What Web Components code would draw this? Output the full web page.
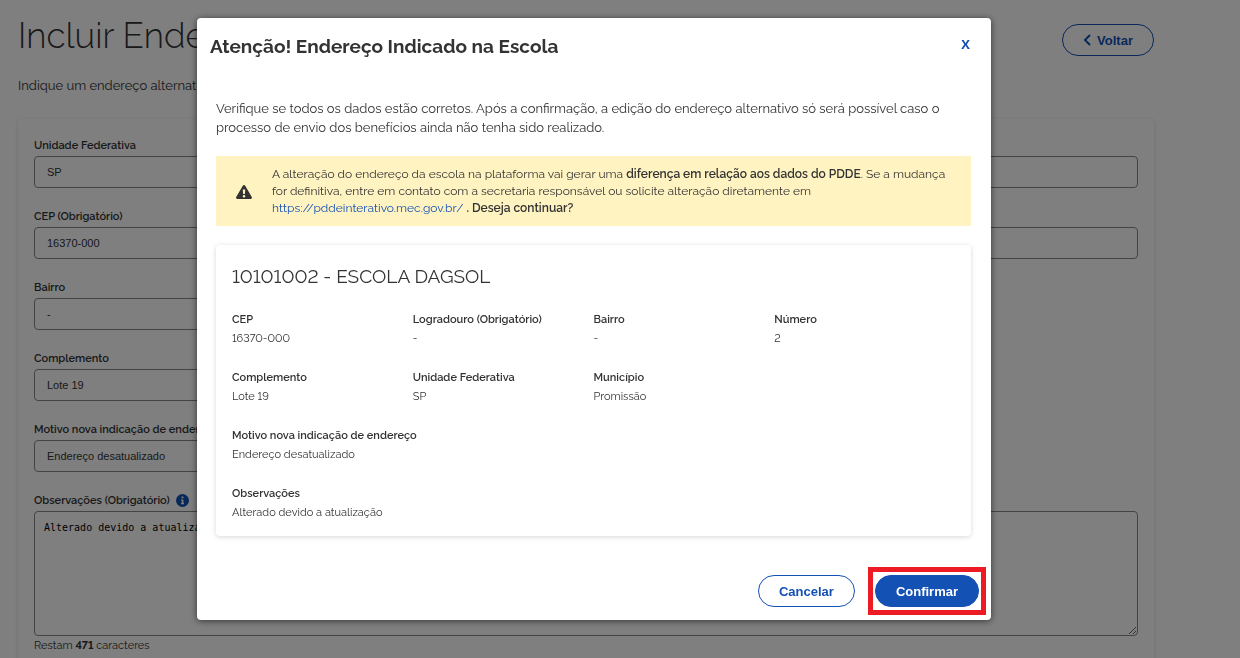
<!DOCTYPE html>
<html lang="pt-BR">
<head>
<meta charset="utf-8">
<meta name="viewport" content="width=device-width, initial-scale=1">
<title>Incluir Endereço Alternativo</title>
<style>
    :root {
        --primary: #1351b4;
        --text: #333;
        --border: #888;
        --font-ui: "Liberation Sans", Arial, sans-serif;
    }
    body {
        margin: 0;
        height: 100vh;
        overflow: hidden;
        background: #fff;
        color: var(--text);
        font-family: Raleway, Lato, sans-serif;
        font-size: 13px;
        font-variant-numeric: lining-nums;
    }
</style>
</head>
<body>
<address-page></address-page>
<app-modal heading="Atenção! Endereço Indicado na Escola">
    <p>Verifique se todos os dados estão corretos. Após a confirmação, a edição do endereço alternativo só será possível caso o processo de envio dos benefícios ainda não tenha sido realizado.</p>
    <alert-box>A alteração do endereço da escola na plataforma vai gerar uma <strong>diferença em relação aos dados do PDDE</strong>. Se a mudança for definitiva, entre em contato com a secretaria responsável ou solicite alteração diretamente em <a href="https://pddeinterativo.mec.gov.br/">https://pddeinterativo.mec.gov.br/</a> <strong>. Deseja continuar?</strong></alert-box>
    <school-card heading="10101002 - ESCOLA DAGSOL">
        <data-item label="CEP">16370-000</data-item>
        <data-item label="Logradouro (Obrigatório)">-</data-item>
        <data-item label="Bairro">-</data-item>
        <data-item label="Número">2</data-item>
        <data-item label="Complemento">Lote 19</data-item>
        <data-item label="Unidade Federativa">SP</data-item>
        <data-item label="Município">Promissão</data-item>
        <data-item label="Motivo nova indicação de endereço" wide>Endereço desatualizado</data-item>
        <data-item label="Observações" wide>Alterado devido a atualização</data-item>
    </school-card>
    <pill-button slot="actions">Cancelar</pill-button>
    <highlight-frame slot="actions"><pill-button primary>Confirmar</pill-button></highlight-frame>
</app-modal>

<script>
class PillButton extends HTMLElement {
    constructor() {
        super();
        this.attachShadow({mode: 'open'});
        this.shadowRoot.innerHTML = `
            <style>
                :host {
                    display: inline-block;
                }
                button {
                    display: flex;
                    align-items: center;
                    gap: 6px;
                    height: 32px;
                    padding: 0 20px;
                    border: 1px solid var(--primary);
                    border-radius: 16px;
                    background: transparent;
                    color: var(--primary);
                    font: bold 13px var(--font-ui);
                    cursor: pointer;
                }
                :host([primary]) button {
                    background: var(--primary);
                    color: #fff;
                }
            </style>
            <button type="button"><slot></slot></button>
        `;
    }
}

class HighlightFrame extends HTMLElement {
    constructor() {
        super();
        this.attachShadow({mode: 'open'});
        this.shadowRoot.innerHTML = `
            <style>
                :host {
                    display: flex;
                    padding: 3px 2px;
                    border: 5px solid #ed1c24;
                }
            </style>
            <slot></slot>
        `;
    }
}

class FormField extends HTMLElement {
    constructor() {
        super();
        this.attachShadow({mode: 'open'});
        const value = this.getAttribute('value') || '';
        const control = this.hasAttribute('multiline')
            ? `<textarea id="control">${value}</textarea>`
            : `<input id="control" type="text" value="${value}">`;
        this.shadowRoot.innerHTML = `
            <style>
                :host {
                    display: block;
                }
                :host([wide]) {
                    grid-column: 1 / -1;
                }
                .label {
                    display: flex;
                    align-items: center;
                    gap: 6px;
                    height: 18px;
                    padding-bottom: 2px;
                    font-size: 11px;
                    font-weight: 600;
                    white-space: nowrap;
                }
                input, textarea {
                    display: block;
                    box-sizing: border-box;
                    width: 100%;
                    border: 1px solid var(--border);
                    border-radius: 4px;
                    background: transparent;
                    color: var(--text);
                }
                input {
                    height: 32px;
                    padding: 0 12px;
                    font: 11px var(--font-ui);
                }
                textarea {
                    height: 125px;
                    padding: 9px;
                    color: #000;
                    font: 10px/14px "DejaVu Sans Mono", monospace;
                }
            </style>
            <div class="label"><label for="control">${this.getAttribute('label')}</label><slot></slot></div>
            ${control}
        `;
    }
}

class AddressPage extends HTMLElement {
    constructor() {
        super();
        this.attachShadow({mode: 'open'});
        this.shadowRoot.innerHTML = `
            <style>
                :host {
                    display: block;
                    padding: 16px 86px 0 18px;
                }
                header {
                    display: flex;
                    justify-content: space-between;
                    align-items: flex-start;
                }
                h1 {
                    margin: 0;
                    font-size: 35px;
                    line-height: 40px;
                    font-weight: 300;
                }
                pill-button {
                    margin-top: 8px;
                }
                p {
                    margin: 20px 0 24px;
                    line-height: 19px;
                }
                form {
                    display: grid;
                    grid-template-columns: 1fr 1fr;
                    gap: 19px 16px;
                    padding: 17px 16px 0;
                    border-radius: 4px;
                    box-shadow: 0 1px 4px rgba(0, 0, 0, .14);
                }
                form-field {
                    grid-column-start: 1;
                }
                .right {
                    grid-column-start: 2;
                }
                .left {
                    grid-column-end: 2;
                }
                .counter {
                    margin: -17px 0 0;
                    grid-column: 1 / -1;
                    font-size: 11px;
                    line-height: 16px;
                    padding-bottom: 24px;
                }
            </style>
            <header>
                <h1>Incluir Endereço</h1>
                <pill-button>
                    <svg width="8" height="12" viewBox="0 0 8 12" fill="none" stroke="currentColor" stroke-width="2"><path d="M7 1 2 6l5 5"/></svg>
                    Voltar
                </pill-button>
            </header>
            <p>Indique um endereço alternativo</p>
            <form>
                <form-field label="Unidade Federativa" value="SP"></form-field>
                <form-field class="right" label="Município" value="Promissão"></form-field>
                <form-field label="CEP (Obrigatório)" value="16370-000"></form-field>
                <form-field class="right" label="Logradouro" value="-"></form-field>
                <form-field class="left" label="Bairro" value="-"></form-field>
                <form-field class="left" label="Complemento" value="Lote 19"></form-field>
                <form-field class="left" label="Motivo nova indicação de endereço" value="Endereço desatualizado"></form-field>
                <form-field wide multiline label="Observações (Obrigatório)" value="Alterado devido a atualização">
                    <svg width="13" height="13" viewBox="0 0 13 13"><circle cx="6.5" cy="6.5" r="6.5" fill="#1351b4"/><path d="M5.6 2.6h1.8v1.7H5.6zM5 5.4h2.4v3.7H8v1.2H5V9.1h.7V6.6H5z" fill="#fff"/></svg>
                </form-field>
                <p class="counter">Restam <strong>471</strong> caracteres</p>
            </form>
        `;
    }
}

class AlertBox extends HTMLElement {
    constructor() {
        super();
        this.attachShadow({mode: 'open'});
        this.shadowRoot.innerHTML = `
            <style>
                :host {
                    display: flex;
                    align-items: center;
                    gap: 20px;
                    margin: 19px 0;
                    padding: 10px 20px 9px;
                    background: #fff3c2;
                    font-size: 12px;
                    line-height: 17px;
                }
                svg {
                    flex: none;
                }
                ::slotted(a) {
                    color: var(--primary);
                    text-decoration: none;
                }
                ::slotted(strong) {
                    font-weight: 600;
                }
            </style>
            <svg width="16" height="14" viewBox="0 0 16 14"><path fill="#333" fill-rule="evenodd" d="M8 0q.8 0 1.2.7l6.6 11.4q.3.7 0 1.2-.4.7-1.2.7H1.4q-.8 0-1.2-.7-.3-.5 0-1.2L6.8.7Q7.2 0 8 0zM6.8 4.4l.3 4.7h1.8l.3-4.7zM8 9.9a1.3 1.3 0 1 0 0 2.6 1.3 1.3 0 0 0 0-2.6z"/></svg>
            <div><slot></slot></div>
        `;
    }
}

class SchoolCard extends HTMLElement {
    constructor() {
        super();
        this.attachShadow({mode: 'open'});
        this.shadowRoot.innerHTML = `
            <style>
                :host {
                    display: block;
                    padding: 16px 16px 14px;
                    border-radius: 4px;
                    box-shadow: 0 1px 5px rgba(0, 0, 0, .16);
                }
                h3 {
                    margin: 0 0 19px;
                    font-size: 19px;
                    line-height: 30px;
                    font-weight: 400;
                }
                .items {
                    display: grid;
                    grid-template-columns: repeat(4, 1fr);
                    row-gap: 20px;
                }
            </style>
            <h3>${this.getAttribute('heading')}</h3>
            <div class="items"><slot></slot></div>
        `;
    }
}

class DataItem extends HTMLElement {
    constructor() {
        super();
        this.attachShadow({mode: 'open'});
        this.shadowRoot.innerHTML = `
            <style>
                :host {
                    display: block;
                    font-size: 11px;
                    line-height: 19px;
                }
                :host([wide]) {
                    grid-column: 1 / -1;
                }
                .label {
                    font-weight: 600;
                }
            </style>
            <div class="label">${this.getAttribute('label')}</div>
            <div class="value"><slot></slot></div>
        `;
    }
}

class AppModal extends HTMLElement {
    constructor() {
        super();
        this.attachShadow({mode: 'open'});
        this.shadowRoot.innerHTML = `
            <style>
                :host {
                    position: fixed;
                    inset: 0;
                    display: flex;
                    justify-content: center;
                    align-items: flex-start;
                    padding: 18px 52px 18px 0;
                    background: rgba(0, 0, 0, .5);
                }
                .dialog {
                    width: 100%;
                    max-width: 794px;
                    border-radius: 4px;
                    background: #fff;
                    box-shadow: 0 1px 7px rgba(0, 0, 0, .6);
                }
                header {
                    display: flex;
                    justify-content: space-between;
                    align-items: flex-start;
                    padding: 14px 17px 0 13px;
                }
                h2 {
                    margin: 0;
                    font-size: 19px;
                    line-height: 28px;
                    font-weight: 700;
                }
                .close {
                    padding: 4px;
                    border: 0;
                    background: none;
                    color: var(--primary);
                    font: bold 13px "Open Sans", sans-serif;
                    line-height: 16px;
                    cursor: pointer;
                }
                .body {
                    padding: 39px 20px 0 19px;
                }
                ::slotted(p) {
                    margin: 0;
                    line-height: 19px;
                }
                footer {
                    display: flex;
                    justify-content: flex-end;
                    align-items: center;
                    gap: 13px;
                    padding: 31px 5px 5px;
                }
            </style>
            <div class="dialog" role="dialog" aria-modal="true" aria-labelledby="title">
                <header>
                    <h2 id="title">${this.getAttribute('heading')}</h2>
                    <button class="close" type="button" aria-label="Fechar">X</button>
                </header>
                <div class="body"><slot></slot></div>
                <footer><slot name="actions"></slot></footer>
            </div>
        `;
    }
}

customElements.define('pill-button', PillButton);
customElements.define('highlight-frame', HighlightFrame);
customElements.define('form-field', FormField);
customElements.define('address-page', AddressPage);
customElements.define('alert-box', AlertBox);
customElements.define('school-card', SchoolCard);
customElements.define('data-item', DataItem);
customElements.define('app-modal', AppModal);
</script>
</body>
</html>
